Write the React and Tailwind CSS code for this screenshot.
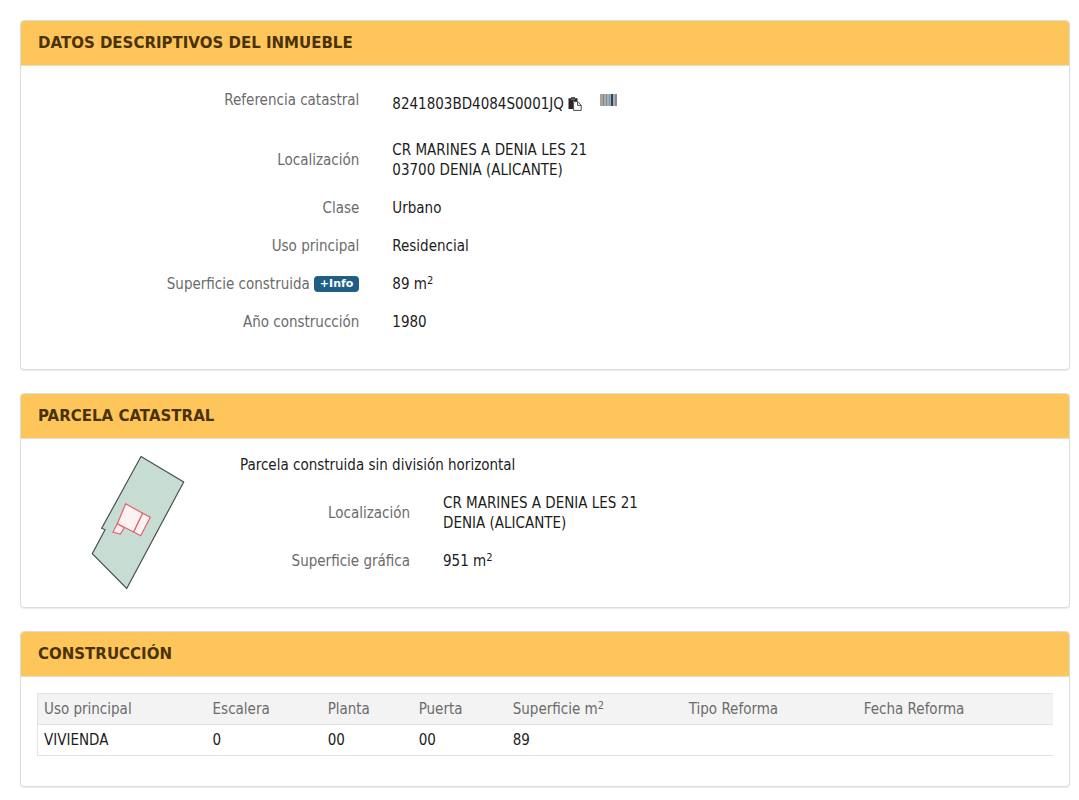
import React, { useState } from 'react';

const REFERENCIA = '8241803BD4084S0001JQ';

const SquareMeters = ({ prefix }) => (
  <>
    {prefix} m<sup className="text-[11px]">2</sup>
  </>
);

const columns = [
  { key: 'uso', title: 'Uso principal', width: 'w-[169px]' },
  { key: 'escalera', title: 'Escalera', width: 'w-[115px]' },
  { key: 'planta', title: 'Planta', width: 'w-[91px]' },
  { key: 'puerta', title: 'Puerta', width: 'w-[94px]' },
  { key: 'superficie', title: <SquareMeters prefix="Superficie" />, width: 'w-[176px]' },
  { key: 'tipo', title: 'Tipo Reforma', width: 'w-[175px]' },
  { key: 'fecha', title: 'Fecha Reforma', width: 'w-[195px]' },
];

const construcciones = [
  { uso: 'VIVIENDA', escalera: '0', planta: '00', puerta: '00', superficie: '89', tipo: '', fecha: '' },
];

const PasteIcon = () => (
  <svg width="14" height="14" viewBox="0 0 14 14" aria-hidden="true">
    <path d="M0.5 1.2h2.5V0.3h4v0.9h2.5V4H5v8H0.5z" fill="#2e2428" />
    <path d="M3 2.2h4" stroke="#b9b4b6" strokeWidth="0.8" />
    <path d="M5.6 4.6h4.2l3.4 3.6v5.2H5.6z" fill="#fff" stroke="#4a4d52" strokeWidth="1" />
    <path d="M9.6 4.8v3.6h3.4" fill="none" stroke="#4a4d52" strokeWidth="1" />
  </svg>
);

const BarcodeIcon = () => (
  <svg width="17" height="12" viewBox="0 0 17 12" aria-hidden="true">
    <rect width="17" height="12" fill="#a3b0b8" />
    <rect width="3" height="12" fill="#b39f93" />
    <rect x="3" width="1" height="12" fill="#7c868c" />
    <rect x="6" width="1" height="12" fill="#7d8d97" />
    <rect x="9" width="1" height="12" fill="#7d99a6" />
    <rect x="11" width="2" height="12" fill="#26435c" />
    <rect x="15" width="2" height="12" fill="#8c8a89" />
  </svg>
);

// Croquis de la parcela con sus construcciones
const ParcelMap = () => (
  <svg width="94" height="136" viewBox="0 0 94 136" role="img" aria-label="Croquis de la parcela">
    <path
      d="M50 1.5L92.7 27L35.7 133.5L1.3 98.7L14 74.7L10.7 73.3z"
      fill="#c7ddd4"
      stroke="#4a514f"
      strokeWidth="1.2"
    />
    <g fill="#fdf1f2" stroke="#e2636b" strokeWidth="1.2">
      <path d="M34.7 48.7L51.7 58.3L42.7 77L26.3 68.7z" />
      <path d="M51.7 58.3L59.3 62.3L49.7 80.7L42.7 77z" />
      <path d="M26.3 68.7L33.3 72.7L29.3 79L22 77z" />
    </g>
  </svg>
);

const Panel = ({ title, children }) => (
  <section className="overflow-hidden rounded-[4px] border border-[#dcdcdc] bg-white shadow-[0_1px_1px_rgba(0,0,0,0.08)]">
    <h2 className="border-b border-[#e6dcc8] bg-[#fec65a] px-[17px] py-3 font-['DejaVu_Sans',sans-serif] text-[15px] leading-5 font-bold text-[#4a3208]">
      {title}
    </h2>
    {children}
  </section>
);

const Field = ({ label, children }) => (
  <div className="flex items-center">
    <dt className="w-1/3 shrink-0 pr-[11px] text-right text-[#6b6b6b]">{label}</dt>
    <dd className="pl-[22px]">{children}</dd>
  </div>
);

const ParcelField = ({ label, children }) => (
  <div className="flex items-center">
    <dt className="w-[170px] shrink-0 text-right text-[#6b6b6b]">{label}</dt>
    <dd className="pl-[33px]">{children}</dd>
  </div>
);

const App = () => {
  const [showInfo, setShowInfo] = useState(false);

  const handleCopy = () => {
    navigator.clipboard?.writeText(REFERENCIA);
  };

  return (
    <main className="flex flex-col gap-[23px] bg-white pt-5 pr-[9px] pb-3 pl-5 font-['DejaVu_Sans_Condensed','DejaVu_Sans',sans-serif] text-[15px] leading-5 text-[#1c1c1c]">
      <Panel title="DATOS DESCRIPTIVOS DEL INMUEBLE">
        <dl className="flex flex-col gap-[18px] pt-6 pb-[37px]">
          <div className="flex items-start pb-2">
            <dt className="w-1/3 shrink-0 pr-[11px] text-right text-[#6b6b6b]">Referencia catastral</dt>
            <dd className="flex items-start pl-[22px]">
              <span className="flex items-center gap-1 pt-1">
                {REFERENCIA}
                <button type="button" onClick={handleCopy} aria-label="Copiar referencia">
                  <PasteIcon />
                </button>
              </span>
              <button type="button" className="ml-[18px] flex h-5 items-center" aria-label="Código de barras">
                <BarcodeIcon />
              </button>
            </dd>
          </div>
          <Field label="Localización">
            CR MARINES A DENIA LES 21
            <br />
            03700 DENIA (ALICANTE)
          </Field>
          <Field label="Clase">Urbano</Field>
          <Field label="Uso principal">Residencial</Field>
          <Field
            label={
              <span className="flex items-center justify-end gap-1">
                Superficie construida
                <button
                  type="button"
                  onClick={() => setShowInfo(!showInfo)}
                  aria-expanded={showInfo}
                  className="rounded-[4px] bg-[#1f5f86] px-[6px] font-['DejaVu_Sans',sans-serif] text-[11px] leading-4 font-bold text-white"
                >
                  +Info
                </button>
              </span>
            }
          >
            <SquareMeters prefix="89" />
          </Field>
          <Field label="Año construcción">1980</Field>
        </dl>
      </Panel>

      <Panel title="PARCELA CATASTRAL">
        <div className="flex items-start pt-4 pb-4 pl-[70px]">
          <ParcelMap />
          <div className="pl-[55px]">
            <p>Parcela construida sin división horizontal</p>
            <dl className="flex flex-col gap-[18px] pt-[18px]">
              <ParcelField label="Localización">
                CR MARINES A DENIA LES 21
                <br />
                DENIA (ALICANTE)
              </ParcelField>
              <ParcelField label="Superficie gráfica">
                <SquareMeters prefix="951" />
              </ParcelField>
            </dl>
          </div>
        </div>
      </Panel>

      <Panel title="CONSTRUCCIÓN">
        <div className="px-4 pt-4 pb-[30px]">
          <table className="w-full table-fixed border-collapse border-y border-l border-[#e2e2e2] text-left">
            <thead>
              <tr className="border-b border-[#e2e2e2] bg-[#f3f3f3] text-[#6b6b6b]">
                {columns.map((col) => (
                  <th key={col.key} scope="col" className={`px-[6px] py-[5px] font-normal ${col.width}`}>
                    {col.title}
                  </th>
                ))}
              </tr>
            </thead>
            <tbody>
              {construcciones.map((row, index) => (
                <tr key={index}>
                  {columns.map((col) => (
                    <td key={col.key} className="px-[6px] py-[5px]">
                      {row[col.key]}
                    </td>
                  ))}
                </tr>
              ))}
            </tbody>
          </table>
        </div>
      </Panel>
    </main>
  );
};

export default App;
